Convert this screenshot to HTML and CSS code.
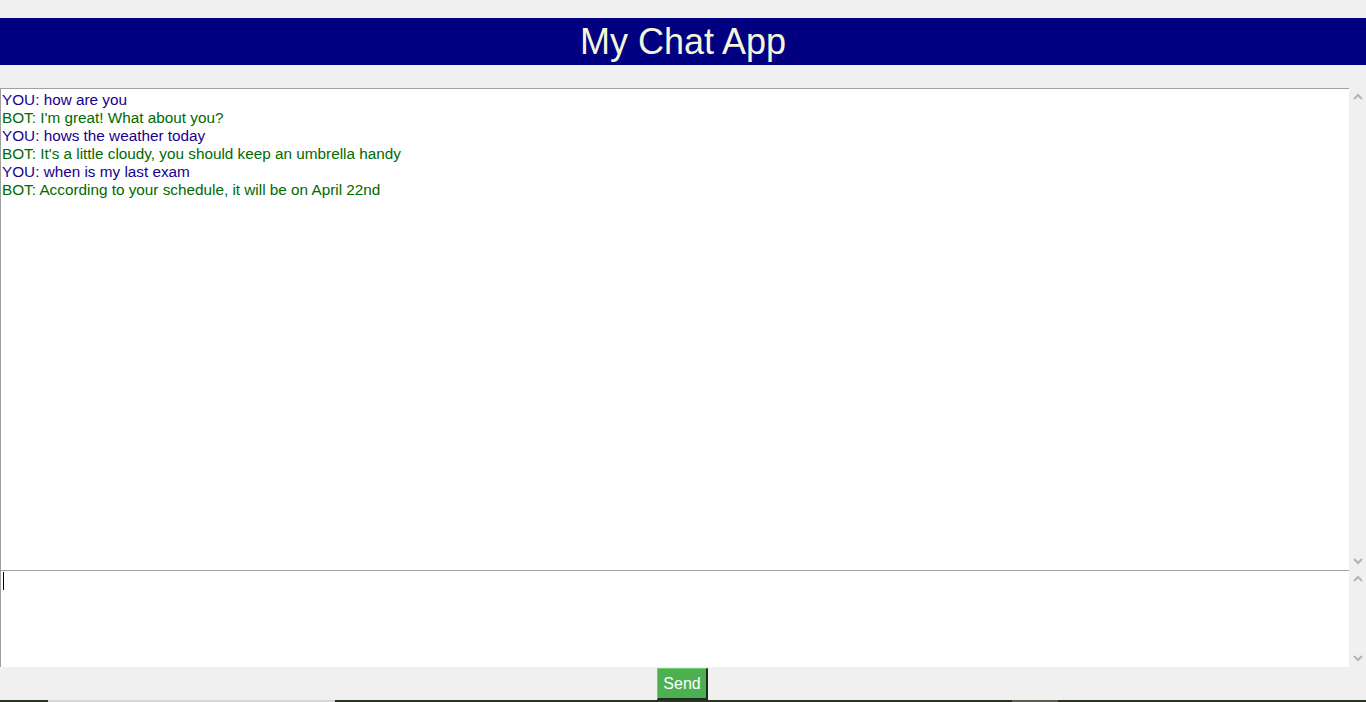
FILE: index.html
```html
<!DOCTYPE html>
<html>
<head>
<meta charset="utf-8">
<title>My Chat App</title>
<link rel="stylesheet" href="styles.css">
</head>
<body>
<div class="app">
  <div class="top-space"></div>
  <header class="header">My Chat App</header>
  <div class="mid-space"></div>
  <div class="pane chat-pane">
    <div class="box chat-box">
      <div class="line you">YOU: how are you</div>
      <div class="line bot">BOT: I'm great! What about you?</div>
      <div class="line you">YOU: hows the weather today</div>
      <div class="line bot">BOT: It's a little cloudy, you should keep an umbrella handy</div>
      <div class="line you">YOU: when is my last exam</div>
      <div class="line bot">BOT: According to your schedule, it will be on April 22nd</div>
    </div>
    <div class="scrollbar">
      <svg class="arrow" viewBox="0 0 16 16" width="16" height="16"><path d="M4 10 L8 6 L12 10" fill="none" stroke="#b4b4b4" stroke-width="2"/></svg>
      <svg class="arrow" viewBox="0 0 16 16" width="16" height="16"><path d="M4 6 L8 10 L12 6" fill="none" stroke="#b4b4b4" stroke-width="2"/></svg>
    </div>
  </div>
  <div class="pane input-pane">
    <div class="box input-box"><span class="caret"></span></div>
    <div class="scrollbar">
      <svg class="arrow" viewBox="0 0 16 16" width="16" height="16"><path d="M4 10 L8 6 L12 10" fill="none" stroke="#b4b4b4" stroke-width="2"/></svg>
      <svg class="arrow" viewBox="0 0 16 16" width="16" height="16"><path d="M4 6 L8 10 L12 6" fill="none" stroke="#b4b4b4" stroke-width="2"/></svg>
    </div>
  </div>
  <div class="actions">
    <button class="send">Send</button>
  </div>
  <div class="taskbar">
    <span class="seg dark s1"></span>
    <span class="seg light s2"></span>
    <span class="seg dark s3"></span>
    <span class="seg mid s4"></span>
    <span class="seg dark s5"></span>
  </div>
</div>
</body>
</html>
```

FILE: styles.css
```css
html, body {
  margin: 0;
  padding: 0;
  background: #f0f0f0;
  font-family: "Liberation Sans", Arial, sans-serif;
  overflow: hidden;
}
.app {
  width: 1366px;
  height: 702px;
  display: flex;
  flex-direction: column;
}
.top-space { height: 18px; }
.header {
  height: 47px;
  background: #000080;
  color: #f5f5dc;
  font-size: 36px;
  line-height: 47px;
  text-align: center;
}
.mid-space { height: 23px; }
.pane {
  display: flex;
}
.chat-pane { height: 482px; }
.input-pane { height: 97px; }
.box {
  flex: 1;
  background: #ffffff;
  border-top: 1px solid #a0a0a0;
  border-left: 1px solid #a0a0a0;
  margin-right: 1px;
  padding: 2px 2px 0 1px;
  font-size: 15.3px;
  line-height: 18px;
}
.line { white-space: pre; }
.you { color: #1a0090; }
.bot { color: #006a00; }
.input-box { padding-top: 1px; }
.caret {
  display: block;
  width: 1px;
  height: 18px;
  margin-left: 1px;
  background: #000;
}
.scrollbar {
  width: 16px;
  background: #f0f0f0;
  display: flex;
  flex-direction: column;
  justify-content: space-between;
  padding: 1px 0;
}
.arrow { display: block; }
.actions {
  height: 33px;
  display: flex;
  justify-content: center;
  align-items: flex-end;
}
.send {
  width: 51px;
  height: 32px;
  margin-right: 1px;
  background: #4caf50;
  color: #ffffff;
  font-family: "Liberation Sans", Arial, sans-serif;
  font-size: 16px;
  border: 0;
  border-top: 1px solid #6ccf70;
  border-left: 1px solid #6ccf70;
  border-right: 2px solid #1e2a1e;
  border-bottom: 2px solid #1e2a1e;
  padding: 0;
}
.taskbar {
  height: 2px;
  display: flex;
}
.seg { height: 2px; display: block; }
.dark { background: #2a3222; }
.light { background: #d6d6d6; }
.mid { background: #5a5e55; }
.s1 { width: 48px; }
.s2 { width: 287px; }
.s3 { width: 677px; }
.s4 { width: 46px; }
.s5 { flex: 1; }
```
